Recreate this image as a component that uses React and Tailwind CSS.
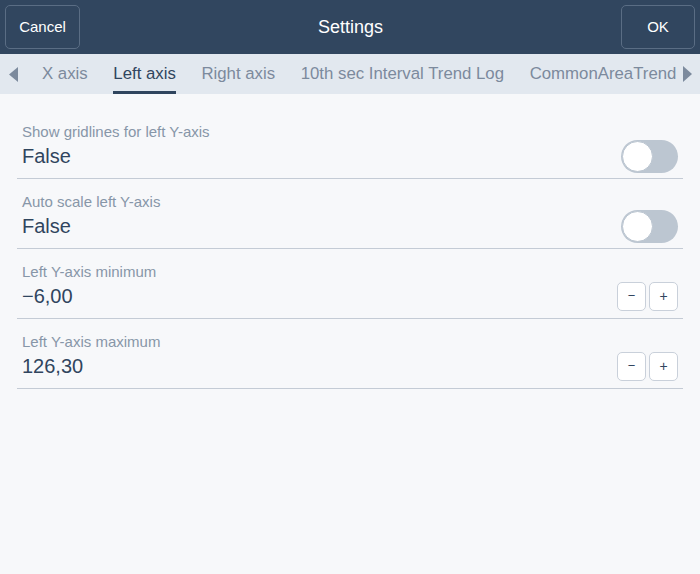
import React, { useState } from "react";

const font = { fontFamily: '"Liberation Sans", Arial, sans-serif' };

const tabs = ["X axis", "Left axis", "Right axis", "10th sec Interval Trend Log", "CommonAreaTrend"];

const Toggle = ({ on, onChange }) => (
  <button
    onClick={() => onChange(!on)}
    className={`w-[57px] h-[33px] rounded-full p-[1px] flex items-center ${on ? "bg-[#3b6ea5] justify-end" : "bg-[#bcc6d1] justify-start"}`}
  >
    <span className="block w-[31px] h-[31px] rounded-full bg-white border border-[#bcc6d1]" />
  </button>
);

const Stepper = ({ onMinus, onPlus }) => (
  <div className="flex gap-[3px]">
    <button
      onClick={onMinus}
      className="w-[29px] h-[29px] rounded-[5px] border border-[#c9d0da] bg-white text-[#30455e] text-[13px] flex items-center justify-center"
    >
      −
    </button>
    <button
      onClick={onPlus}
      className="w-[29px] h-[29px] rounded-[5px] border border-[#c9d0da] bg-white text-[#30455e] text-[14px] flex items-center justify-center"
    >
      +
    </button>
  </div>
);

const Row = ({ label, value, children }) => (
  <div className="pt-[14px] pb-[10px] px-[5px] border-b border-[#c4cbd5]">
    <div className="text-[15px] leading-[17px] text-[#8796a8]">{label}</div>
    <div className="mt-[4px] flex items-center justify-between h-[24px]">
      <span className="text-[20px] leading-[24px] text-[#30455e]">{value}</span>
      {children}
    </div>
  </div>
);

const fmt = (n) => (n < 0 ? "−" : "") + Math.abs(n).toFixed(2).replace(".", ",");

export default function App() {
  const [gridlines, setGridlines] = useState(false);
  const [autoScale, setAutoScale] = useState(false);
  const [min, setMin] = useState(-6);
  const [max, setMax] = useState(126.3);

  return (
    <div className="w-[700px] h-[574px] bg-[#f7f8fa] flex flex-col" style={font}>
      <div className="h-[54px] bg-[#31465f] flex items-center justify-between px-[5px]">
        <button className="w-[75px] h-[44px] rounded-[5px] border border-[#5a6d84] text-white text-[15px]">
          Cancel
        </button>
        <div className="text-white text-[18px]">Settings</div>
        <button className="w-[74px] h-[44px] rounded-[5px] border border-[#5a6d84] text-white text-[15px]">
          OK
        </button>
      </div>

      <div className="h-[40px] bg-[#e2e8ef] flex items-stretch">
        <div className="w-[28px] flex items-center justify-center pr-[1px]">
          <svg width="9" height="15" viewBox="0 0 9 15">
            <path d="M9 0 L0 7.5 L9 15 Z" fill="#7c8a9d" />
          </svg>
        </div>
        <div className="flex-1 overflow-hidden flex items-stretch gap-[25.6px] pl-[14px]">
          {tabs.map((t, i) => (
            <div
              key={t}
              className={`shrink-0 flex items-center text-[16.8px] whitespace-nowrap border-b-[3px] pt-[3px] ${i === 1 ? "text-[#30455e] border-[#30455e]" : "text-[#7c8a9d] border-transparent"}`}
            >
              {t}
            </div>
          ))}
        </div>
        <div className="w-[23px] flex items-center justify-start pl-[6px]">
          <svg width="9" height="16" viewBox="0 0 9 16">
            <path d="M0 0 L9 8 L0 16 Z" fill="#7c8a9d" />
          </svg>
        </div>
      </div>

      <div className="px-[17px] pt-[15px]">
        <Row label="Show gridlines for left Y-axis" value={gridlines ? "True" : "False"}>
          <Toggle on={gridlines} onChange={setGridlines} />
        </Row>
        <Row label="Auto scale left Y-axis" value={autoScale ? "True" : "False"}>
          <Toggle on={autoScale} onChange={setAutoScale} />
        </Row>
        <Row label="Left Y-axis minimum" value={fmt(min)}>
          <Stepper onMinus={() => setMin(min - 1)} onPlus={() => setMin(min + 1)} />
        </Row>
        <Row label="Left Y-axis maximum" value={fmt(max)}>
          <Stepper onMinus={() => setMax(max - 1)} onPlus={() => setMax(max + 1)} />
        </Row>
      </div>
    </div>
  );
}
